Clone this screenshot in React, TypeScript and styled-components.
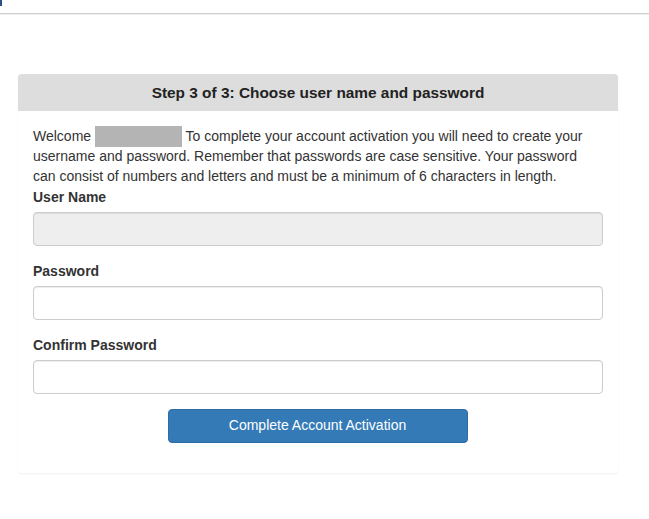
import React from "react";
import styled, { createGlobalStyle } from "styled-components";

const Global = createGlobalStyle`
  html, body { margin: 0; padding: 0; background: #fff; }
  body {
    font-family: "Liberation Sans", Arial, sans-serif;
    font-size: 14px;
    line-height: 1.42857;
    color: #333;
  }
  * { box-sizing: border-box; }
`;

const TopBar = styled.div`
  height: 14px;
  border-bottom: 1px solid #cfcfcf;
  box-shadow: 0 1px 0 #f0f0f0;
  position: relative;
`;

const Marker = styled.div`
  position: absolute;
  left: 0;
  top: 0;
  width: 2px;
  height: 6px;
  background: #2b4f86;
`;

const Page = styled.main`
  padding: 60px 31px 40px 18px;
`;

const Panel = styled.section`
  width: 600px;
  border-radius: 4px;
  box-shadow: 0 1px 2px rgba(0, 0, 0, 0.06);
  background: #fff;
`;

const Heading = styled.h3`
  margin: 0;
  padding: 10px 15px;
  background: #dddddd;
  border-radius: 4px 4px 0 0;
  font-size: 15.4px;
  font-weight: bold;
  line-height: 17px;
  text-align: center;
  color: #222;
`;

const Body = styled.div`
  padding: 15px 15px 30px;
`;

const Intro = styled.p`
  margin: 0 0 1px;
`;

const Redacted = styled.span`
  display: inline-block;
  width: 87px;
  height: 21px;
  background: #b4b4b4;
  vertical-align: -6px;
`;

const Group = styled.div`
  margin-bottom: 15px;
  & + & {
    padding-top: 1px;
  }
`;

const Label = styled.label`
  display: block;
  font-weight: bold;
  margin-bottom: 4px;
  color: #333;
`;

const Input = styled.input<{ $readOnly?: boolean }>`
  display: block;
  width: 100%;
  height: 34px;
  padding: 6px 12px;
  font: inherit;
  border: 1px solid #ccc;
  border-radius: 4px;
  box-shadow: inset 0 1px 1px rgba(0, 0, 0, 0.075);
  background: ${(p) => (p.$readOnly ? "#eeeeee" : "#fff")};
`;

const Actions = styled.div`
  display: flex;
  justify-content: center;
  padding-right: 1px;
`;

const Button = styled.button`
  width: 300px;
  height: 34px;
  background: #337ab7;
  color: #fff;
  border: 1px solid #2e6da4;
  border-radius: 4px;
  font: inherit;
  font-size: 14px;
  cursor: pointer;
`;

export default function App() {
  return (
    <>
      <Global />
      <TopBar>
        <Marker />
      </TopBar>
      <Page>
        <Panel>
          <Heading>Step 3 of 3: Choose user name and password</Heading>
          <Body>
            <Intro>
              Welcome <Redacted /> To complete your account activation you will need to create your
              username and password. Remember that passwords are case sensitive. Your password can
              consist of numbers and letters and must be a minimum of 6 characters in length.
            </Intro>
            <Group>
              <Label>User Name</Label>
              <Input $readOnly readOnly />
            </Group>
            <Group>
              <Label>Password</Label>
              <Input type="password" />
            </Group>
            <Group>
              <Label>Confirm Password</Label>
              <Input type="password" />
            </Group>
            <Actions>
              <Button>Complete Account Activation</Button>
            </Actions>
          </Body>
        </Panel>
      </Page>
    </>
  );
}
